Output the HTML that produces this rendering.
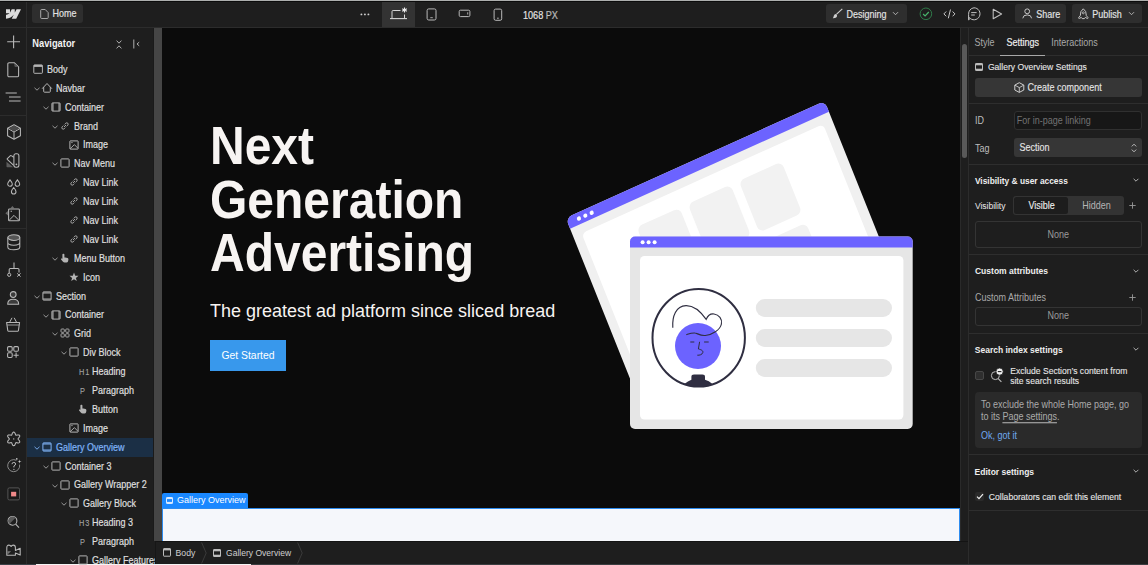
<!DOCTYPE html>
<html><head><meta charset="utf-8">
<style>
*{box-sizing:border-box;margin:0;padding:0}
html,body{width:1148px;height:565px;overflow:hidden;background:#1e1e1e}
body{font-family:"Liberation Sans",sans-serif;color:#d8d8d8;position:relative}
.a{position:absolute}
.t{position:absolute;white-space:nowrap;line-height:1}
svg{position:absolute;overflow:visible}
.ln{position:absolute;background:#2c2c2c}
</style></head><body>
<!-- top edge -->
<div class="a" style="left:0;top:0;width:1148px;height:1px;background:#adafae"></div>
<div class="a" style="left:0;top:1px;width:1148px;height:1px;background:#0c0c0c"></div>
<!-- top bar bottom border -->
<div class="ln" style="left:0;top:27px;width:1148px;height:1px"></div>

<!-- TOP BAR -->
<svg style="left:6px;top:9px" width="15" height="10" viewBox="0 0 1080 675"><path d="M1080 0L735.386 675H411.695L555.916 395.233H549.445C430.464 550.004 252.942 651.882 0 675V399.1C0 399.1 161.813 389.542 256.938 289.51H0V0.0041H288.771V237.522L295.252 237.496L413.253 0.0041H631.644V236.011L638.126 236.001L760.556 0H1080Z" fill="#dcdcdc"/></svg>
<div class="a" style="left:32px;top:4.3px;width:51px;height:19px;border-radius:3px;background:#2e2e2e"></div>
<svg style="left:40px;top:9px" width="9" height="10" viewBox="0 0 9 10"><path d="M1.6 0.5 H5.2 L8.2 3.6 V8.6 Q8.2 9.5 7.3 9.5 H1.6 Q0.7 9.5 0.7 8.6 V1.4 Q0.7 0.5 1.6 0.5 Z" fill="none" stroke="#b5b5b5" stroke-width="0.9"/></svg>
<div class="t" style="left:52.5px;top:10.4px;font-size:9px;color:#e3e3e3;transform:scaleY(1.12);transform-origin:0 7.62px;-webkit-text-stroke:0.15px #e3e3e3">Home</div>

<svg style="left:360px;top:12.5px" width="10" height="3" viewBox="0 0 10 3"><circle cx="1.4" cy="1.4" r="0.95" fill="#cfcfcf"/><circle cx="4.9" cy="1.4" r="0.95" fill="#cfcfcf"/><circle cx="8.4" cy="1.4" r="0.95" fill="#cfcfcf"/></svg>
<div class="a" style="left:382px;top:2px;width:33px;height:25px;background:#333"></div>
<svg style="left:389px;top:6px" width="20" height="14" viewBox="0 0 20 14"><path d="M3 12.3 V5.6 Q3 4.5 4.1 4.5 H11.5" fill="none" stroke="#d6d6d6" stroke-width="1"/><path d="M15.5 8.5 V12.3" stroke="#d6d6d6" stroke-width="1"/><path d="M1 12.6 H18" stroke="#d6d6d6" stroke-width="1.1"/><path d="M15.5 1.4 V6.6 M13.2 2.7 L17.8 5.3 M13.2 5.3 L17.8 2.7" stroke="#eeeeee" stroke-width="1.1"/></svg>
<svg style="left:426px;top:7.5px" width="11" height="13" viewBox="0 0 11 13"><rect x="1.1" y="0.9" width="8.9" height="11.1" rx="1.6" fill="none" stroke="#b9b9b9" stroke-width="1"/><path d="M4.3 9.7 H6.8" stroke="#b9b9b9" stroke-width="0.9"/></svg>
<svg style="left:458px;top:9px" width="13" height="9" viewBox="0 0 13 9"><rect x="1.2" y="1.2" width="10.7" height="6.4" rx="1.3" fill="none" stroke="#b9b9b9" stroke-width="1"/><path d="M9.7 3.3 V5.5" stroke="#b9b9b9" stroke-width="0.9"/></svg>
<svg style="left:493px;top:7.5px" width="10" height="13" viewBox="0 0 10 13"><rect x="1.1" y="1.1" width="7.6" height="11.2" rx="1.5" fill="none" stroke="#b9b9b9" stroke-width="1"/><path d="M4 10.2 H5.8" stroke="#b9b9b9" stroke-width="0.9"/></svg>
<div class="t" style="left:523px;top:11.5px;font-size:9.1px;color:#e6e6e6;transform:scaleY(1.12);transform-origin:0 7.62px;-webkit-text-stroke:0.15px #e3e3e3">1068 <span style="color:#a8a8a8">PX</span></div>

<div class="a" style="left:826px;top:4.4px;width:81.3px;height:18.6px;border-radius:3px;background:#2e2e2e"></div>
<svg style="left:832px;top:8px" width="11" height="11" viewBox="0 0 11 11"><path d="M10.3 0.8 L4.6 6.2" stroke="#d0d0d0" stroke-width="1.1"/><path d="M4.2 6 Q2.3 5.8 1.8 7.7 Q1.5 9.2 0.8 10.2 Q3 10.3 4.2 9.4 Q5.5 8.3 4.9 6.8 Z" fill="#d0d0d0"/></svg>
<div class="t" style="left:846.5px;top:10.7px;font-size:9px;color:#e3e3e3;transform:scaleY(1.12);transform-origin:0 7.62px;-webkit-text-stroke:0.15px #e3e3e3">Designing</div>
<svg style="left:892px;top:11px" width="7" height="5" viewBox="0 0 7 5"><path d="M1 1.2 L3.5 3.7 L6 1.2" fill="none" stroke="#bdbdbd" stroke-width="0.9"/></svg>
<svg style="left:919px;top:6.5px" width="14" height="14" viewBox="0 0 14 14"><circle cx="6.9" cy="6.8" r="5.8" fill="none" stroke="#2f7a49" stroke-width="1"/><path d="M4.1 7 L6.1 9 L9.8 5" fill="none" stroke="#48b36c" stroke-width="1.2"/></svg>
<svg style="left:943px;top:7.5px" width="13" height="12" viewBox="0 0 13 12"><path d="M3.2 3.5 L0.9 5.9 L3.2 8.3 M9.6 3.5 L11.9 5.9 L9.6 8.3 M7.5 1.5 L5.3 10.3" fill="none" stroke="#c8c8c8" stroke-width="1"/></svg>
<svg style="left:966.5px;top:6.5px" width="14" height="14" viewBox="0 0 14 14"><path d="M7 0.8 A6 6 0 1 1 2.2 10.4 L2 13 Q1.6 13.2 1.6 12.8 V7.3 A6 6 0 0 1 7 0.8 Z" fill="none" stroke="#c0c0c0" stroke-width="1"/><path d="M4.2 5.6 H9.6 M4.2 8 H7.8" stroke="#c0c0c0" stroke-width="1"/></svg>
<svg style="left:992px;top:7.7px" width="11" height="12" viewBox="0 0 11 12"><path d="M1.2 1.2 L9.6 6 L1.2 10.8 Z" fill="none" stroke="#c0c0c0" stroke-width="1.05" stroke-linejoin="round"/></svg>

<div class="a" style="left:1015.3px;top:4.3px;width:50.7px;height:18.4px;border-radius:3px;background:#2e2e2e"></div>
<svg style="left:1022px;top:8px" width="11" height="11" viewBox="0 0 11 11"><circle cx="5.2" cy="3.3" r="2.4" fill="none" stroke="#c8c8c8" stroke-width="1"/><path d="M0.8 10.3 Q1 6.9 5.2 6.9 Q9.4 6.9 9.6 10.3" fill="none" stroke="#c8c8c8" stroke-width="1"/></svg>
<div class="t" style="left:1036.3px;top:10.8px;font-size:9px;color:#e3e3e3;transform:scaleY(1.12);transform-origin:0 7.62px;-webkit-text-stroke:0.15px #e3e3e3">Share</div>
<div class="a" style="left:1072.4px;top:4.3px;width:69.6px;height:18.4px;border-radius:3px;background:#2e2e2e"></div>
<svg style="left:1078px;top:7.5px" width="11" height="12" viewBox="0 0 11 12"><path d="M5.3 0.8 Q8.6 3 8.3 7.6 L10 9.6 Q10.2 10.6 9.2 10.4 L7.3 9.4 L6.4 10.6 H4.2 L3.3 9.4 L1.4 10.4 Q0.5 10.6 0.7 9.6 L2.3 7.6 Q2 3 5.3 0.8 Z" fill="none" stroke="#c8c8c8" stroke-width="1" stroke-linejoin="round"/><circle cx="5.3" cy="4.8" r="1" fill="none" stroke="#c8c8c8" stroke-width="0.8"/></svg>
<div class="t" style="left:1092.3px;top:10.8px;font-size:9px;color:#e3e3e3;transform:scaleY(1.12);transform-origin:0 7.62px;-webkit-text-stroke:0.15px #e3e3e3">Publish</div>
<svg style="left:1127.5px;top:11px" width="7" height="5" viewBox="0 0 7 5"><path d="M1 1.2 L3.5 3.7 L6 1.2" fill="none" stroke="#bdbdbd" stroke-width="0.9"/></svg>

<!-- left rail border -->
<div class="ln" style="left:26px;top:2px;width:1px;height:563px"></div>
<div class="ln" style="left:0;top:115px;width:26px;height:1px"></div>
<div class="ln" style="left:0;top:228px;width:26px;height:1px"></div>

<!-- canvas -->
<div class="a" id="canvas" style="left:162px;top:28px;width:798px;height:513px;background:#0b0b0b;overflow:hidden"></div>
<!-- canvas content -->
<div class="t" style="left:210px;top:124.0px;font-size:48px;line-height:48px;font-weight:700;color:#f7f4f2;transform:scaleY(1.105);transform-origin:0 40.63px">Next</div>
<div class="t" style="left:210px;top:177.5px;font-size:48px;line-height:48px;font-weight:700;color:#f7f4f2;transform:scaleY(1.105);transform-origin:0 40.63px">Generation</div>
<div class="t" style="left:210px;top:230.9px;font-size:48px;line-height:48px;font-weight:700;color:#f7f4f2;transform:scaleY(1.105);transform-origin:0 40.63px">Advertising</div>

<div class="t" style="left:210px;top:301.6px;font-size:18px;line-height:18px;color:#f7f4f2;transform:scaleY(1.06);transform-origin:0 15.24px">The greatest ad platform since sliced bread</div>
<div class="a" style="left:210px;top:340px;width:76px;height:30.5px;background:#3898ec"></div>
<div class="t" style="left:210px;top:350.9px;width:76px;text-align:center;font-size:10.4px;color:#fff;transform:scaleY(1.12);transform-origin:0 8.8px">Get Started</div>

<svg style="left:0;top:0" width="1148" height="565" viewBox="0 0 1148 565">
 <g transform="matrix(0.9113,-0.412,0.3714,0.9285,565.8,218.0)">
  <rect x="0" y="0" width="284" height="200" rx="6.5" fill="#f0f0f0"/>
  <path d="M0 11.6 V6.5 A6.5 6.5 0 0 1 6.5 0 H277.5 A6.5 6.5 0 0 1 284 6.5 V11.6 Z" fill="#6c63ff"/>
  <circle cx="12" cy="5.9" r="2.1" fill="#fff"/><circle cx="19" cy="5.9" r="2.1" fill="#fff"/><circle cx="26" cy="5.9" r="2.1" fill="#fff"/>
  <rect x="9" y="20.5" width="265" height="172" rx="5" fill="#fff"/>
  <rect x="62.5" y="37.5" width="47" height="55.5" rx="6" fill="#f2f2f2"/>
  <rect x="118.5" y="37.5" width="47" height="55.5" rx="6" fill="#f2f2f2"/>
  <rect x="174.5" y="37.5" width="47" height="55.5" rx="6" fill="#f2f2f2"/>
  <rect x="62.5" y="103.5" width="47" height="55.5" rx="6" fill="#f2f2f2"/>
  <rect x="118.5" y="103.5" width="47" height="55.5" rx="6" fill="#f2f2f2"/>
  <rect x="174.5" y="103.5" width="47" height="55.5" rx="6" fill="#f2f2f2"/>
 </g>
 <rect x="630" y="236.5" width="282.7" height="192.5" rx="5" fill="#e6e6e6"/>
 <path d="M630 247.6 V241.5 A5 5 0 0 1 635 236.5 H907.7 A5 5 0 0 1 912.7 241.5 V247.6 Z" fill="#6c63ff"/>
 <circle cx="642.6" cy="242.2" r="2" fill="#fff"/><circle cx="648.6" cy="242.2" r="2" fill="#fff"/><circle cx="654.6" cy="242.2" r="2" fill="#fff"/>
 <rect x="640" y="256" width="263.4" height="163.6" rx="4.5" fill="#fff"/>
 <rect x="755.8" y="299" width="136.2" height="18" rx="9" fill="#e6e6e6"/>
 <rect x="755.8" y="329" width="136.2" height="18" rx="9" fill="#e6e6e6"/>
 <rect x="755.8" y="359" width="136.2" height="18" rx="9" fill="#e6e6e6"/>
 <ellipse cx="698.7" cy="337.7" rx="46.2" ry="48.8" fill="#fff" stroke="#2f2e41" stroke-width="2"/>
 <circle cx="698" cy="346" r="23" fill="#6c63ff"/>
 <path d="M684.3 384 Q688 381 691.4 379.8 V376.8 Q691.4 374.4 694 374.4 H702.4 Q705 374.4 705 376.8 V379.8 Q709 381 712.2 383.8 Q699 389.8 684.3 384 Z" fill="#2f2e41"/>
 <path d="M672.8 327.8 C672 316 676 306 686 305.6 C694 305.4 701 312 706.2 319.4 C708 315 711 313.6 714 314 C719 314.6 722.5 319 721.4 324 C720.2 330 712 334.8 705.3 335.5 C700 336 697 333 694.9 333 C691 332.8 688.5 334 686.3 334.7" fill="none" stroke="#2f2e41" stroke-width="1.15"/>
 <path d="M690.3 342 H694.3 M704.1 342 H708.7" stroke="#2f2e41" stroke-width="1"/>
 <path d="M699.6 341.8 L698.4 349 C701 349.6 703.4 350.6 702.8 352.6 C702.2 354.6 699.6 355.4 697.3 355.2" fill="none" stroke="#2f2e41" stroke-width="1"/>
</svg>

<!-- selected section -->
<div class="a" style="left:162px;top:507.6px;width:798px;height:33.4px;background:#f5f7fb;border:1px solid #2d8cf0;border-bottom:0"></div>
<div class="a" style="left:162px;top:493px;width:86px;height:15px;background:#1a88ff;border-radius:2px 2px 0 0"></div>
<svg style="left:166px;top:497px" width="7" height="7" viewBox="0 0 7 7"><rect x="0.5" y="0.5" width="6" height="6" rx="0.6" fill="none" stroke="#d8e9ff" stroke-width="1"/><rect x="0.5" y="0.5" width="6" height="1.6" fill="#d8e9ff"/><rect x="0.5" y="4.9" width="6" height="1.6" fill="#d8e9ff"/></svg>
<div class="t" style="left:177px;top:496.2px;font-size:9px;color:#fff">Gallery Overview</div>


<!-- nav scroll strip -->
<div class="a" style="left:153px;top:28px;width:1px;height:513px;background:#1a1a1a"></div>
<div class="a" style="left:154px;top:28px;width:8px;height:513px;background:#454545"></div>

<!-- right scroll strip -->
<div class="a" style="left:960px;top:28px;width:1px;height:537px;background:#2a2a2a"></div>
<div class="a" style="left:962px;top:44px;width:5px;height:114px;border-radius:3px;background:#595959"></div>
<div class="ln" style="left:968px;top:28px;width:1px;height:537px"></div>

<!-- breadcrumb -->
<div class="a" style="left:154.5px;top:541px;width:813.5px;height:22.5px;background:#1e1e1e;border-top:1px solid #141414;border-left:1px solid #161616"></div>

<!-- bottom row -->
<div class="a" style="left:0;top:564px;width:36px;height:1px;background:#3a4046"></div>
<div class="a" style="left:36px;top:564px;width:215px;height:1px;background:#f4f4f4"></div>
<div class="a" style="left:251px;top:564px;width:897px;height:1px;background:#3a3d40"></div>
<!--NAV-START-->
<div class="a" style="left:27px;top:28px;width:128px;height:537px;overflow:hidden">
<div class="t" style="left:5.3px;top:11.72px;font-size:9.3px;font-weight:700;color:#f2f2f2;transform:scaleY(1.12);transform-origin:0 7.88px">Navigator</div>
<svg style="left:89px;top:12px" width="6" height="9" viewBox="0 0 6 9"><path d="M0.6 0.6 L3 3.2 L5.4 0.6 M0.6 8.4 L3 5.8 L5.4 8.4" fill="none" stroke="#bdbdbd" stroke-width="0.9"/></svg>
<svg style="left:105.5px;top:11px" width="8" height="10" viewBox="0 0 8 10"><path d="M0.8 0.5 V9.5" stroke="#bdbdbd" stroke-width="0.9"/><path d="M6.2 3.2 L4 5 L6.2 6.8" fill="none" stroke="#bdbdbd" stroke-width="0.9"/></svg>
<svg style="left:6.4px;top:36.0px" width="10" height="10" viewBox="0 0 10 10"><rect x="0.8" y="0.9" width="8.6" height="8.4" rx="0.6" fill="none" stroke="#b4b4b4" stroke-width="1"/><rect x="0.9" y="1" width="8.4" height="1.9" fill="#b4b4b4"/></svg>
<div class="t" style="left:20px;top:37.88px;font-size:9px;transform:scaleY(1.12);transform-origin:0 7.62px;color:#dedede;-webkit-text-stroke:0.2px #dedede">Body</div>
<svg style="left:7.0px;top:58.89px" width="6" height="4" viewBox="0 0 6 4"><path d="M0.5 0.8 L3 3.2 L5.5 0.8" fill="none" stroke="#a5a5a5" stroke-width="0.9"/></svg>
<svg style="left:15.4px;top:54.89px" width="10" height="10" viewBox="0 0 10 10"><path d="M0.4 5.4 L5 0.5 L9.6 5.4" fill="none" stroke="#b4b4b4" stroke-width="1" stroke-linejoin="round" stroke-linecap="round"/><path d="M1.7 4.1 V8.5 Q1.7 9.2 2.4 9.2 H7.6 Q8.3 9.2 8.3 8.5 V4.1" fill="none" stroke="#b4b4b4" stroke-width="1"/></svg>
<div class="t" style="left:29px;top:56.77px;font-size:9px;transform:scaleY(1.12);transform-origin:0 7.62px;color:#dedede;-webkit-text-stroke:0.2px #dedede">Navbar</div>
<svg style="left:16.0px;top:77.78px" width="6" height="4" viewBox="0 0 6 4"><path d="M0.5 0.8 L3 3.2 L5.5 0.8" fill="none" stroke="#a5a5a5" stroke-width="0.9"/></svg>
<svg style="left:24.4px;top:73.78px" width="10" height="10" viewBox="0 0 10 10"><rect x="0.9" y="0.9" width="8.2" height="8.2" rx="0.6" fill="none" stroke="#b4b4b4" stroke-width="1"/><rect x="1" y="1" width="1.9" height="8" fill="#b4b4b4" opacity=".55"/><rect x="7.1" y="1" width="1.9" height="8" fill="#b4b4b4" opacity=".55"/></svg>
<div class="t" style="left:38px;top:75.66px;font-size:9px;transform:scaleY(1.12);transform-origin:0 7.62px;color:#dedede;-webkit-text-stroke:0.2px #dedede">Container</div>
<svg style="left:25.0px;top:96.67px" width="6" height="4" viewBox="0 0 6 4"><path d="M0.5 0.8 L3 3.2 L5.5 0.8" fill="none" stroke="#a5a5a5" stroke-width="0.9"/></svg>
<svg style="left:33.4px;top:92.67px" width="10" height="10" viewBox="0 0 10 10"><path d="M4.6 3.4 L5.8 2.2 Q6.8 1.4 7.8 2.2 Q8.6 3.2 7.8 4.2 L6.6 5.4 M5.4 6.6 L4.2 7.8 Q3.2 8.6 2.2 7.8 Q1.4 6.8 2.2 5.8 L3.4 4.6" fill="none" stroke="#b4b4b4" stroke-width="0.9"/><path d="M4 6 L6 4" stroke="#b4b4b4" stroke-width="0.9"/></svg>
<div class="t" style="left:47px;top:94.55px;font-size:9px;transform:scaleY(1.12);transform-origin:0 7.62px;color:#dedede;-webkit-text-stroke:0.2px #dedede">Brand</div>
<svg style="left:42.4px;top:111.56px" width="10" height="10" viewBox="0 0 10 10"><rect x="0.9" y="0.9" width="8.2" height="8.2" rx="0.4" fill="none" stroke="#b4b4b4" stroke-width="1"/><path d="M1.1 8.8 L5.4 4.6 L8.9 8.2" fill="none" stroke="#b4b4b4" stroke-width="0.9"/><path d="M2.3 2.6 H3.6" stroke="#b4b4b4" stroke-width="0.9"/></svg>
<div class="t" style="left:56px;top:113.44px;font-size:9px;transform:scaleY(1.12);transform-origin:0 7.62px;color:#dedede;-webkit-text-stroke:0.2px #dedede">Image</div>
<svg style="left:25.0px;top:134.45px" width="6" height="4" viewBox="0 0 6 4"><path d="M0.5 0.8 L3 3.2 L5.5 0.8" fill="none" stroke="#a5a5a5" stroke-width="0.9"/></svg>
<svg style="left:33.4px;top:130.45px" width="10" height="10" viewBox="0 0 10 10"><rect x="0.9" y="0.9" width="8.2" height="8.2" rx="0.6" fill="none" stroke="#b4b4b4" stroke-width="1"/></svg>
<div class="t" style="left:47px;top:132.33px;font-size:9px;transform:scaleY(1.12);transform-origin:0 7.62px;color:#dedede;-webkit-text-stroke:0.2px #dedede">Nav Menu</div>
<svg style="left:42.4px;top:149.34px" width="10" height="10" viewBox="0 0 10 10"><path d="M4.6 3.4 L5.8 2.2 Q6.8 1.4 7.8 2.2 Q8.6 3.2 7.8 4.2 L6.6 5.4 M5.4 6.6 L4.2 7.8 Q3.2 8.6 2.2 7.8 Q1.4 6.8 2.2 5.8 L3.4 4.6" fill="none" stroke="#b4b4b4" stroke-width="0.9"/><path d="M4 6 L6 4" stroke="#b4b4b4" stroke-width="0.9"/></svg>
<div class="t" style="left:56px;top:151.22px;font-size:9px;transform:scaleY(1.12);transform-origin:0 7.62px;color:#dedede;-webkit-text-stroke:0.2px #dedede">Nav Link</div>
<svg style="left:42.4px;top:168.23px" width="10" height="10" viewBox="0 0 10 10"><path d="M4.6 3.4 L5.8 2.2 Q6.8 1.4 7.8 2.2 Q8.6 3.2 7.8 4.2 L6.6 5.4 M5.4 6.6 L4.2 7.8 Q3.2 8.6 2.2 7.8 Q1.4 6.8 2.2 5.8 L3.4 4.6" fill="none" stroke="#b4b4b4" stroke-width="0.9"/><path d="M4 6 L6 4" stroke="#b4b4b4" stroke-width="0.9"/></svg>
<div class="t" style="left:56px;top:170.11px;font-size:9px;transform:scaleY(1.12);transform-origin:0 7.62px;color:#dedede;-webkit-text-stroke:0.2px #dedede">Nav Link</div>
<svg style="left:42.4px;top:187.12px" width="10" height="10" viewBox="0 0 10 10"><path d="M4.6 3.4 L5.8 2.2 Q6.8 1.4 7.8 2.2 Q8.6 3.2 7.8 4.2 L6.6 5.4 M5.4 6.6 L4.2 7.8 Q3.2 8.6 2.2 7.8 Q1.4 6.8 2.2 5.8 L3.4 4.6" fill="none" stroke="#b4b4b4" stroke-width="0.9"/><path d="M4 6 L6 4" stroke="#b4b4b4" stroke-width="0.9"/></svg>
<div class="t" style="left:56px;top:189.0px;font-size:9px;transform:scaleY(1.12);transform-origin:0 7.62px;color:#dedede;-webkit-text-stroke:0.2px #dedede">Nav Link</div>
<svg style="left:42.4px;top:206.01px" width="10" height="10" viewBox="0 0 10 10"><path d="M4.6 3.4 L5.8 2.2 Q6.8 1.4 7.8 2.2 Q8.6 3.2 7.8 4.2 L6.6 5.4 M5.4 6.6 L4.2 7.8 Q3.2 8.6 2.2 7.8 Q1.4 6.8 2.2 5.8 L3.4 4.6" fill="none" stroke="#b4b4b4" stroke-width="0.9"/><path d="M4 6 L6 4" stroke="#b4b4b4" stroke-width="0.9"/></svg>
<div class="t" style="left:56px;top:207.89px;font-size:9px;transform:scaleY(1.12);transform-origin:0 7.62px;color:#dedede;-webkit-text-stroke:0.2px #dedede">Nav Link</div>
<svg style="left:25.0px;top:228.9px" width="6" height="4" viewBox="0 0 6 4"><path d="M0.5 0.8 L3 3.2 L5.5 0.8" fill="none" stroke="#a5a5a5" stroke-width="0.9"/></svg>
<svg style="left:33.4px;top:224.9px" width="10" height="10" viewBox="0 0 10 10"><path d="M3.3 0.8 Q4.3 0.6 4.4 1.6 V4.6 Q6.2 4.4 7.6 5 Q8.6 5.5 8.4 6.8 L8 8.6 Q7.6 9.6 6.5 9.6 H4.6 Q3.6 9.6 3 8.8 L1.1 6.5 Q0.7 5.8 1.3 5.5 Q1.9 5.2 2.4 5.8 V1.6 Q2.4 0.9 3.3 0.8 Z" fill="#b4b4b4"/></svg>
<div class="t" style="left:47px;top:226.78px;font-size:9px;transform:scaleY(1.12);transform-origin:0 7.62px;color:#dedede;-webkit-text-stroke:0.2px #dedede">Menu Button</div>
<svg style="left:42.4px;top:243.79px" width="10" height="10" viewBox="0 0 10 10"><path d="M5 0.6 L6.2 3.7 L9.5 3.8 L6.9 5.9 L7.8 9.1 L5 7.3 L2.2 9.1 L3.1 5.9 L0.5 3.8 L3.8 3.7 Z" fill="#b4b4b4"/></svg>
<div class="t" style="left:56px;top:245.67px;font-size:9px;transform:scaleY(1.12);transform-origin:0 7.62px;color:#dedede;-webkit-text-stroke:0.2px #dedede">Icon</div>
<svg style="left:7.0px;top:266.68px" width="6" height="4" viewBox="0 0 6 4"><path d="M0.5 0.8 L3 3.2 L5.5 0.8" fill="none" stroke="#a5a5a5" stroke-width="0.9"/></svg>
<svg style="left:15.4px;top:262.68px" width="10" height="10" viewBox="0 0 10 10"><rect x="0.9" y="0.9" width="8.2" height="8.2" rx="0.6" fill="none" stroke="#b4b4b4" stroke-width="1"/><rect x="1" y="1" width="8" height="1.9" fill="#b4b4b4" opacity=".55"/><rect x="1" y="7.1" width="8" height="1.9" fill="#b4b4b4" opacity=".55"/></svg>
<div class="t" style="left:29px;top:264.56px;font-size:9px;transform:scaleY(1.12);transform-origin:0 7.62px;color:#dedede;-webkit-text-stroke:0.2px #dedede">Section</div>
<svg style="left:16.0px;top:285.57px" width="6" height="4" viewBox="0 0 6 4"><path d="M0.5 0.8 L3 3.2 L5.5 0.8" fill="none" stroke="#a5a5a5" stroke-width="0.9"/></svg>
<svg style="left:24.4px;top:281.57px" width="10" height="10" viewBox="0 0 10 10"><rect x="0.9" y="0.9" width="8.2" height="8.2" rx="0.6" fill="none" stroke="#b4b4b4" stroke-width="1"/><rect x="1" y="1" width="1.9" height="8" fill="#b4b4b4" opacity=".55"/><rect x="7.1" y="1" width="1.9" height="8" fill="#b4b4b4" opacity=".55"/></svg>
<div class="t" style="left:38px;top:283.45px;font-size:9px;transform:scaleY(1.12);transform-origin:0 7.62px;color:#dedede;-webkit-text-stroke:0.2px #dedede">Container</div>
<svg style="left:25.0px;top:304.46px" width="6" height="4" viewBox="0 0 6 4"><path d="M0.5 0.8 L3 3.2 L5.5 0.8" fill="none" stroke="#a5a5a5" stroke-width="0.9"/></svg>
<svg style="left:33.4px;top:300.46px" width="10" height="10" viewBox="0 0 10 10"><rect x="1" y="1" width="3.3" height="3.3" rx="0.8" fill="none" stroke="#b4b4b4" stroke-width="0.9"/><rect x="5.7" y="1" width="3.3" height="3.3" rx="0.8" fill="none" stroke="#b4b4b4" stroke-width="0.9"/><rect x="1" y="5.7" width="3.3" height="3.3" rx="0.8" fill="none" stroke="#b4b4b4" stroke-width="0.9"/><rect x="5.7" y="5.7" width="3.3" height="3.3" rx="0.8" fill="none" stroke="#b4b4b4" stroke-width="0.9"/></svg>
<div class="t" style="left:47px;top:302.34px;font-size:9px;transform:scaleY(1.12);transform-origin:0 7.62px;color:#dedede;-webkit-text-stroke:0.2px #dedede">Grid</div>
<svg style="left:34.0px;top:323.35px" width="6" height="4" viewBox="0 0 6 4"><path d="M0.5 0.8 L3 3.2 L5.5 0.8" fill="none" stroke="#a5a5a5" stroke-width="0.9"/></svg>
<svg style="left:42.4px;top:319.35px" width="10" height="10" viewBox="0 0 10 10"><rect x="0.9" y="0.9" width="8.2" height="8.2" rx="0.6" fill="none" stroke="#b4b4b4" stroke-width="1"/></svg>
<div class="t" style="left:56px;top:321.23px;font-size:9px;transform:scaleY(1.12);transform-origin:0 7.62px;color:#dedede;-webkit-text-stroke:0.2px #dedede">Div Block</div>
<div class="t" style="left:51.7px;top:340.12px;font-size:9px;color:#a5a5a5;letter-spacing:1.1px;transform:scale(0.82,1.1);transform-origin:0 7.62px;-webkit-text-stroke:0.1px #a5a5a5">H1</div>
<div class="t" style="left:65px;top:340.12px;font-size:9px;transform:scaleY(1.12);transform-origin:0 7.62px;color:#dedede;-webkit-text-stroke:0.2px #dedede">Heading</div>
<div class="t" style="left:52.6px;top:359.01px;font-size:9px;color:#a5a5a5;letter-spacing:0;transform:scale(0.82,1.1);transform-origin:0 7.62px;-webkit-text-stroke:0.1px #a5a5a5">P</div>
<div class="t" style="left:65px;top:359.01px;font-size:9px;transform:scaleY(1.12);transform-origin:0 7.62px;color:#dedede;-webkit-text-stroke:0.2px #dedede">Paragraph</div>
<svg style="left:51.4px;top:376.02px" width="10" height="10" viewBox="0 0 10 10"><path d="M3.3 0.8 Q4.3 0.6 4.4 1.6 V4.6 Q6.2 4.4 7.6 5 Q8.6 5.5 8.4 6.8 L8 8.6 Q7.6 9.6 6.5 9.6 H4.6 Q3.6 9.6 3 8.8 L1.1 6.5 Q0.7 5.8 1.3 5.5 Q1.9 5.2 2.4 5.8 V1.6 Q2.4 0.9 3.3 0.8 Z" fill="#b4b4b4"/></svg>
<div class="t" style="left:65px;top:377.9px;font-size:9px;transform:scaleY(1.12);transform-origin:0 7.62px;color:#dedede;-webkit-text-stroke:0.2px #dedede">Button</div>
<svg style="left:42.4px;top:394.91px" width="10" height="10" viewBox="0 0 10 10"><rect x="0.9" y="0.9" width="8.2" height="8.2" rx="0.4" fill="none" stroke="#b4b4b4" stroke-width="1"/><path d="M1.1 8.8 L5.4 4.6 L8.9 8.2" fill="none" stroke="#b4b4b4" stroke-width="0.9"/><path d="M2.3 2.6 H3.6" stroke="#b4b4b4" stroke-width="0.9"/></svg>
<div class="t" style="left:56px;top:396.79px;font-size:9px;transform:scaleY(1.12);transform-origin:0 7.62px;color:#dedede;-webkit-text-stroke:0.2px #dedede">Image</div>
<div class="a" style="left:0;top:409.7px;width:126px;height:19px;background:#1b2f45"></div>
<svg style="left:7.0px;top:417.8px" width="6" height="4" viewBox="0 0 6 4"><path d="M0.5 0.8 L3 3.2 L5.5 0.8" fill="none" stroke="#7fb2f5" stroke-width="0.9"/></svg>
<svg style="left:15.4px;top:413.8px" width="10" height="10" viewBox="0 0 10 10"><rect x="0.9" y="0.9" width="8.2" height="8.2" rx="0.6" fill="none" stroke="#7fb2f5" stroke-width="1"/><rect x="1" y="1" width="8" height="1.9" fill="#7fb2f5" opacity=".55"/><rect x="1" y="7.1" width="8" height="1.9" fill="#7fb2f5" opacity=".55"/></svg>
<div class="t" style="left:29px;top:415.68px;font-size:9px;transform:scaleY(1.12);transform-origin:0 7.62px;color:#7fb2f5;-webkit-text-stroke:0.2px #7fb2f5">Gallery Overview</div>
<svg style="left:16.0px;top:436.69px" width="6" height="4" viewBox="0 0 6 4"><path d="M0.5 0.8 L3 3.2 L5.5 0.8" fill="none" stroke="#a5a5a5" stroke-width="0.9"/></svg>
<svg style="left:24.4px;top:432.69px" width="10" height="10" viewBox="0 0 10 10"><rect x="0.9" y="0.9" width="8.2" height="8.2" rx="0.6" fill="none" stroke="#b4b4b4" stroke-width="1"/></svg>
<div class="t" style="left:38px;top:434.57px;font-size:9px;transform:scaleY(1.12);transform-origin:0 7.62px;color:#dedede;-webkit-text-stroke:0.2px #dedede">Container 3</div>
<svg style="left:25.0px;top:455.58px" width="6" height="4" viewBox="0 0 6 4"><path d="M0.5 0.8 L3 3.2 L5.5 0.8" fill="none" stroke="#a5a5a5" stroke-width="0.9"/></svg>
<svg style="left:33.4px;top:451.58px" width="10" height="10" viewBox="0 0 10 10"><rect x="0.9" y="0.9" width="8.2" height="8.2" rx="0.6" fill="none" stroke="#b4b4b4" stroke-width="1"/></svg>
<div class="t" style="left:47px;top:453.46px;font-size:9px;transform:scaleY(1.12);transform-origin:0 7.62px;color:#dedede;-webkit-text-stroke:0.2px #dedede">Gallery Wrapper 2</div>
<svg style="left:34.0px;top:474.47px" width="6" height="4" viewBox="0 0 6 4"><path d="M0.5 0.8 L3 3.2 L5.5 0.8" fill="none" stroke="#a5a5a5" stroke-width="0.9"/></svg>
<svg style="left:42.4px;top:470.47px" width="10" height="10" viewBox="0 0 10 10"><rect x="0.9" y="0.9" width="8.2" height="8.2" rx="0.6" fill="none" stroke="#b4b4b4" stroke-width="1"/></svg>
<div class="t" style="left:56px;top:472.35px;font-size:9px;transform:scaleY(1.12);transform-origin:0 7.62px;color:#dedede;-webkit-text-stroke:0.2px #dedede">Gallery Block</div>
<div class="t" style="left:51.7px;top:491.24px;font-size:9px;color:#a5a5a5;letter-spacing:1.1px;transform:scale(0.82,1.1);transform-origin:0 7.62px;-webkit-text-stroke:0.1px #a5a5a5">H3</div>
<div class="t" style="left:65px;top:491.24px;font-size:9px;transform:scaleY(1.12);transform-origin:0 7.62px;color:#dedede;-webkit-text-stroke:0.2px #dedede">Heading 3</div>
<div class="t" style="left:52.6px;top:510.13px;font-size:9px;color:#a5a5a5;letter-spacing:0;transform:scale(0.82,1.1);transform-origin:0 7.62px;-webkit-text-stroke:0.1px #a5a5a5">P</div>
<div class="t" style="left:65px;top:510.13px;font-size:9px;transform:scaleY(1.12);transform-origin:0 7.62px;color:#dedede;-webkit-text-stroke:0.2px #dedede">Paragraph</div>
<svg style="left:43.0px;top:531.14px" width="6" height="4" viewBox="0 0 6 4"><path d="M0.5 0.8 L3 3.2 L5.5 0.8" fill="none" stroke="#a5a5a5" stroke-width="0.9"/></svg>
<svg style="left:51.4px;top:527.14px" width="10" height="10" viewBox="0 0 10 10"><rect x="0.9" y="0.9" width="8.2" height="8.2" rx="0.6" fill="none" stroke="#b4b4b4" stroke-width="1"/></svg>
<div class="t" style="left:65px;top:529.02px;font-size:9px;transform:scaleY(1.12);transform-origin:0 7.62px;color:#dedede;-webkit-text-stroke:0.2px #dedede">Gallery Features</div>
</div>
<svg style="left:7px;top:34.5px" width="14" height="14" viewBox="0 0 14 14"><path d="M6.6 0.4 V13.2 M0.2 6.8 H13" stroke="#b8b8b8" stroke-width="1.1"/></svg>
<svg style="left:7px;top:61.5px" width="13" height="16" viewBox="0 0 13 16"><path d="M2.2 0.8 H7.4 L11.6 5 V13.4 Q11.6 14.8 10.2 14.8 H2.2 Q0.8 14.8 0.8 13.4 V2.2 Q0.8 0.8 2.2 0.8 Z" fill="none" stroke="#b8b8b8" stroke-width="1.05"/><path d="M7.4 1.2 L11.2 5 H8.6 Q7.4 5 7.4 3.8 Z" fill="#555"/></svg>
<svg style="left:5px;top:91.5px" width="17" height="11" viewBox="0 0 17 11"><path d="M0.6 1 H11.8 M4 5 H15.6 M4 9 H15.6" stroke="#b8b8b8" stroke-width="1.05"/></svg>
<svg style="left:6.5px;top:124px" width="15" height="17" viewBox="0 0 15 17"><path d="M7 0.8 L13.4 4.3 V11.8 L7 15.3 L0.6 11.8 V4.3 Z" fill="none" stroke="#b8b8b8" stroke-width="1.05" stroke-linejoin="round"/><path d="M0.8 4.4 L7 8 L13.2 4.4 M7 8 V15" fill="none" stroke="#b8b8b8" stroke-width="1"/><path d="M7 1.6 L12.4 4.4 L7 7.3 L1.6 4.4 Z" fill="#4a4a4a"/></svg>
<svg style="left:6px;top:152.5px" width="14" height="15" viewBox="0 0 14 15"><path d="M0.5 8.7 V13.6 Q0.5 14.3 1.2 14.3 H7.2 Z" fill="#5c5c5c"/><rect x="7.9" y="0.7" width="5" height="13.6" rx="2" fill="none" stroke="#b8b8b8" stroke-width="1.05"/><circle cx="10.4" cy="11.3" r="0.9" fill="#b8b8b8"/><path d="M7.7 4.3 L5.3 2.6 Q4.9 2.3 4.5 2.6 L1.3 5.6 Q0.9 6 1.3 6.4 L7.7 12.4" fill="none" stroke="#b8b8b8" stroke-width="1.05" stroke-linejoin="round"/></svg>
<svg style="left:6.5px;top:179px" width="14" height="17" viewBox="0 0 14 17"><path d="M3 0.8 Q5.3 3.6 5.3 5 A2.3 2.3 0 0 1 0.7 5 Q0.7 3.6 3 0.8 Z M10.4 0.8 Q12.7 3.6 12.7 5 A2.3 2.3 0 0 1 8.1 5 Q8.1 3.6 10.4 0.8 Z M6.7 8.5 Q9 11.3 9 12.7 A2.3 2.3 0 0 1 4.4 12.7 Q4.4 11.3 6.7 8.5 Z" fill="none" stroke="#b8b8b8" stroke-width="1.05"/></svg>
<svg style="left:4.5px;top:206px" width="16" height="16" viewBox="0 0 16 16"><path d="M5.4 2.3 L7.4 0.1 L9.4 2.3 Z M0.4 7.3 L2.9 5 V9.6 Z" fill="#6a6a6a"/><rect x="3.6" y="2.9" width="10.8" height="11.9" rx="0.9" fill="none" stroke="#b8b8b8" stroke-width="1.05"/><path d="M4.2 14.2 L9 9.4 L13.8 14.2" fill="none" stroke="#b8b8b8" stroke-width="1"/><path d="M5.6 5.3 H7" stroke="#b8b8b8" stroke-width="1.1"/></svg>
<svg style="left:6.5px;top:234px" width="14" height="17" viewBox="0 0 14 17"><ellipse cx="6.8" cy="3.6" rx="6" ry="2.8" fill="#555" stroke="#b8b8b8" stroke-width="1.05"/><path d="M0.8 3.6 V13 Q0.8 15.8 6.8 15.8 Q12.8 15.8 12.8 13 V3.6 M0.8 8.6 Q0.8 11.2 6.8 11.2 Q12.8 11.2 12.8 8.6" fill="none" stroke="#b8b8b8" stroke-width="1.05"/></svg>
<svg style="left:6.5px;top:262px" width="15" height="16" viewBox="0 0 15 16"><path d="M7 0.5 V6 M2.2 11 V7.6 Q2.2 6.4 3.4 6.4 H10.8 Q12 6.4 12 7.6 V10.6" fill="none" stroke="#b8b8b8" stroke-width="1.05"/><circle cx="2.2" cy="12.8" r="1.6" fill="none" stroke="#b8b8b8" stroke-width="1"/><path d="M10.2 11.4 L13.6 14.6 M13.6 11.4 L10.2 14.6" stroke="#b8b8b8" stroke-width="1"/></svg>
<svg style="left:7px;top:290.5px" width="13" height="14" viewBox="0 0 13 14"><circle cx="6.2" cy="3.5" r="2.9" fill="#3c3c3c" stroke="#b8b8b8" stroke-width="1.05"/><path d="M0.7 13.2 Q0.7 8.2 6.2 8.2 Q11.7 8.2 11.7 13.2 Z" fill="#3c3c3c" stroke="#b8b8b8" stroke-width="1.05" stroke-linejoin="round"/></svg>
<svg style="left:6px;top:317px" width="15" height="15" viewBox="0 0 15 15"><path d="M0.6 5.4 H13.6 L12.4 13.6 Q12.2 14.2 11.6 14.2 H2.6 Q2 14.2 1.8 13.6 Z" fill="none" stroke="#b8b8b8" stroke-width="1.05" stroke-linejoin="round"/><path d="M3.6 5.4 L6 0.8 M10.6 5.4 L8.2 0.8" stroke="#b8b8b8" stroke-width="1"/><path d="M1.2 8 H13" stroke="#b8b8b8" stroke-width="0.8"/></svg>
<svg style="left:7px;top:345.5px" width="13" height="13" viewBox="0 0 13 13"><rect x="0.6" y="0.6" width="4.6" height="4.6" rx="1.1" fill="none" stroke="#b8b8b8" stroke-width="1.05"/><rect x="6.8" y="0.6" width="4.6" height="4.6" rx="1.1" fill="none" stroke="#b8b8b8" stroke-width="1.05"/><rect x="0.6" y="6.8" width="4.6" height="4.6" rx="1.1" fill="none" stroke="#b8b8b8" stroke-width="1.05"/><path d="M9.1 6.6 V11.8 M6.5 9.2 H11.7" stroke="#b8b8b8" stroke-width="1.05"/></svg>
<svg style="left:6.5px;top:431.5px" width="14" height="15" viewBox="0 0 14 15"><path d="M6.70 0.05 L7.28 0.24 L7.78 0.77 L8.15 1.49 L8.40 2.23 L8.61 2.81 L8.88 3.13 L9.29 3.20 L9.90 3.09 L10.66 2.94 L11.47 2.90 L12.17 3.07 L12.63 3.47 L12.76 4.08 L12.55 4.77 L12.11 5.45 L11.60 6.04 L11.20 6.51 L11.05 6.90 L11.20 7.29 L11.60 7.76 L12.11 8.35 L12.55 9.03 L12.76 9.72 L12.63 10.32 L12.17 10.73 L11.47 10.90 L10.66 10.86 L9.90 10.71 L9.29 10.60 L8.88 10.67 L8.61 10.99 L8.40 11.57 L8.15 12.31 L7.78 13.03 L7.28 13.56 L6.70 13.75 L6.12 13.56 L5.62 13.03 L5.25 12.31 L5.00 11.57 L4.79 10.99 L4.53 10.67 L4.11 10.60 L3.50 10.71 L2.74 10.86 L1.93 10.90 L1.23 10.73 L0.77 10.33 L0.64 9.72 L0.85 9.03 L1.29 8.35 L1.80 7.76 L2.20 7.29 L2.35 6.90 L2.20 6.51 L1.80 6.04 L1.29 5.45 L0.85 4.77 L0.64 4.08 L0.77 3.48 L1.23 3.07 L1.93 2.90 L2.74 2.94 L3.50 3.09 L4.11 3.20 L4.53 3.13 L4.79 2.81 L5.00 2.23 L5.25 1.49 L5.62 0.77 L6.12 0.24 L6.70 0.05 Z" fill="none" stroke="#b8b8b8" stroke-width="1.05" stroke-linejoin="round"/><circle cx="6.7" cy="6.9" r="0.7" fill="#b8b8b8"/></svg>
<svg style="left:6.5px;top:457.5px" width="15" height="16" viewBox="0 0 15 16"><path d="M9.4 2.3 A6 6 0 1 0 12.6 6.6" fill="none" stroke="#8a8a8a" stroke-width="1"/><path d="M5 6.2 Q5 4.4 6.8 4.4 Q8.6 4.4 8.6 6 Q8.6 7.2 6.9 8 V9.4" fill="none" stroke="#b8b8b8" stroke-width="1"/><circle cx="6.9" cy="11.4" r="0.6" fill="#b8b8b8"/><path d="M12.6 1.6 L13 3.2 L14.6 3.6 L13 4 L12.6 5.6 L12.2 4 L10.6 3.6 L12.2 3.2 Z" fill="#d8d8d8"/><circle cx="9.8" cy="0.9" r="0.8" fill="#cfcfcf"/></svg>
<svg style="left:6.5px;top:486.5px" width="14" height="14" viewBox="0 0 14 14"><rect x="0.9" y="0.9" width="11.6" height="12" rx="1.4" fill="#1a1a1a" stroke="#565656" stroke-width="1"/><rect x="4.1" y="4.8" width="5.1" height="4.6" fill="#f08a8a"/></svg>
<svg style="left:7px;top:514.5px" width="13" height="14" viewBox="0 0 13 14"><circle cx="5.5" cy="5.8" r="4.4" fill="none" stroke="#b8b8b8" stroke-width="1.05"/><path d="M2.4 8.9 A4.4 4.4 0 0 1 8.6 2.7 Z" fill="#5a5a5a"/><path d="M8.7 9.2 L12 12.6" stroke="#b8b8b8" stroke-width="1.1"/></svg>
<svg style="left:5.5px;top:544px" width="15" height="12" viewBox="0 0 15 12"><path d="M0.8 11.2 V3.8 Q0.8 1.1 2.9 1.1 Q4.5 1.1 5.1 2.5 Q5.7 1.1 7.3 1.1 Q9.4 1.1 9.4 3.8 V6.5 L14.2 4.3 V11.1 L9.4 9 V11.2 Z" fill="none" stroke="#b8b8b8" stroke-width="1.05" stroke-linejoin="round"/><path d="M1.4 7.2 H5.2 L1.4 10.6 Z" fill="#777"/></svg>
<!--NAV-END-->
<!--RP-START-->
<div class="t" style="left:974.5px;top:39.08px;font-size:9px;color:#a9a9a9;transform:scaleY(1.12);transform-origin:0 7.62px;">Style</div>
<div class="t" style="left:1006.5px;top:39.08px;font-size:9px;color:#f0f0f0;transform:scaleY(1.12);transform-origin:0 7.62px;-webkit-text-stroke:0.15px #f0f0f0">Settings</div>
<div class="t" style="left:1051.3px;top:39.08px;font-size:9px;color:#a9a9a9;transform:scaleY(1.12);transform-origin:0 7.62px;">Interactions</div>
<div class="a" style="left:969px;top:55px;width:179px;height:1px;background:#2e2e2e;"></div>
<div class="a" style="left:1000px;top:55px;width:45.3px;height:1px;background:#a8a8a8;"></div>
<svg style="left:975.4px;top:63.4px" width="8" height="8" viewBox="0 0 8 8"><rect x="0.5" y="0.5" width="7" height="7" rx="0.6" fill="none" stroke="#bdbdbd" stroke-width="1"/><rect x="0.5" y="0.5" width="7" height="1.8" fill="#bdbdbd"/><rect x="0.5" y="5.7" width="7" height="1.8" fill="#bdbdbd"/></svg>
<div class="t" style="left:987.9px;top:63.02px;font-size:8.6px;color:#e6e6e6;transform:scaleY(1.12);transform-origin:0 7.28px;-webkit-text-stroke:0.1px #e6e6e6">Gallery Overview Settings</div>
<div class="a" style="left:974.9px;top:78.3px;width:167.1px;height:18.5px;background:#363636;border-radius:3px"></div>
<svg style="left:1013.5px;top:82px" width="11" height="11" viewBox="0 0 11 11"><path d="M5.3 0.7 L9.8 3.1 V8 L5.3 10.4 L0.8 8 V3.1 Z" fill="none" stroke="#d0d0d0" stroke-width="1" stroke-linejoin="round"/><path d="M0.9 3.2 L5.3 5.6 L9.7 3.2 M5.3 5.6 V10.3" fill="none" stroke="#d0d0d0" stroke-width="0.9"/></svg>
<div class="t" style="left:1027.6px;top:84.28px;font-size:9px;color:#e6e6e6;transform:scaleY(1.12);transform-origin:0 7.62px;-webkit-text-stroke:0.1px #e6e6e6">Create component</div>
<div class="a" style="left:969px;top:103px;width:179px;height:1px;background:#2e2e2e;"></div>
<div class="t" style="left:974.9px;top:117.48px;font-size:9px;color:#bdbdbd;transform:scaleY(1.12);transform-origin:0 7.62px;">ID</div>
<div class="a" style="left:1013.6px;top:111.1px;width:128px;height:18.7px;background:#171717;border:1px solid #303030;border-radius:3px"></div>
<div class="t" style="left:1016.8px;top:116.88px;font-size:9px;color:#727272;transform:scaleY(1.12);transform-origin:0 7.62px;">For in-page linking</div>
<div class="t" style="left:974.9px;top:144.58px;font-size:9px;color:#bdbdbd;transform:scaleY(1.12);transform-origin:0 7.62px;">Tag</div>
<div class="a" style="left:1013.6px;top:138.2px;width:128px;height:18.7px;background:#363636;border-radius:3px"></div>
<div class="t" style="left:1019.5px;top:144.08px;font-size:9px;color:#e6e6e6;transform:scaleY(1.12);transform-origin:0 7.62px;-webkit-text-stroke:0.1px #e6e6e6">Section</div>
<svg style="left:1130.5px;top:142.5px" width="6" height="10" viewBox="0 0 6 10"><path d="M0.8 3.4 L3 1.2 L5.2 3.4 M0.8 6.6 L3 8.8 L5.2 6.6" fill="none" stroke="#c8c8c8" stroke-width="0.9"/></svg>
<div class="a" style="left:969px;top:164px;width:179px;height:1px;background:#2e2e2e;"></div>
<div class="t" style="left:974.9px;top:176.59px;font-size:8.4px;font-weight:700;color:#efefef;transform:scaleY(1.12);transform-origin:0 7.11px;">Visibility &amp; user access</div>
<svg style="left:1133.2px;top:178.0px" width="6" height="4" viewBox="0 0 6 4"><path d="M0.6 0.8 L3 3.2 L5.4 0.8" fill="none" stroke="#bdbdbd" stroke-width="0.9"/></svg>
<div class="t" style="left:974.9px;top:202.30px;font-size:8.5px;color:#dedede;transform:scaleY(1.12);transform-origin:0 7.20px;-webkit-text-stroke:0.1px #dedede">Visibility</div>
<div class="a" style="left:1013.1px;top:195.9px;width:110.9px;height:19.1px;background:#333333;border-radius:3px"></div>
<div class="a" style="left:1014.4px;top:197.1px;width:53.9px;height:16.6px;background:#1d1d1d;border-radius:2.5px"></div>
<div class="t" style="left:1028.4px;top:201.68px;font-size:9px;color:#f0f0f0;transform:scaleY(1.12);transform-origin:0 7.62px;-webkit-text-stroke:0.1px #f0f0f0">Visible</div>
<div class="t" style="left:1082.2px;top:201.68px;font-size:9px;color:#b5b5b5;transform:scaleY(1.12);transform-origin:0 7.62px;">Hidden</div>
<svg style="left:1129.2px;top:202.4px" width="7" height="7" viewBox="0 0 7 7"><path d="M3.5 0.3 V6.7 M0.3 3.5 H6.7" stroke="#9a9a9a" stroke-width="0.9"/></svg>
<div class="a" style="left:974.9px;top:221.4px;width:167.1px;height:26.3px;background:transparent;border:1px solid #343434;border-radius:3px"></div>
<div class="t" style="left:1047.6px;top:231.38px;font-size:9px;color:#9a9a9a;transform:scaleY(1.12);transform-origin:0 7.62px;">None</div>
<div class="a" style="left:969px;top:254px;width:179px;height:1px;background:#2e2e2e;"></div>
<div class="t" style="left:974.9px;top:266.76px;font-size:8.55px;font-weight:700;color:#efefef;transform:scaleY(1.12);transform-origin:0 7.24px;">Custom attributes</div>
<svg style="left:1133.2px;top:268.8px" width="6" height="4" viewBox="0 0 6 4"><path d="M0.6 0.8 L3 3.2 L5.4 0.8" fill="none" stroke="#bdbdbd" stroke-width="0.9"/></svg>
<div class="t" style="left:974.9px;top:293.98px;font-size:9px;color:#a9a9a9;transform:scaleY(1.12);transform-origin:0 7.62px;">Custom Attributes</div>
<svg style="left:1129.2px;top:294.0px" width="7" height="7" viewBox="0 0 7 7"><path d="M3.5 0.3 V6.7 M0.3 3.5 H6.7" stroke="#9a9a9a" stroke-width="0.9"/></svg>
<div class="a" style="left:974.9px;top:306.6px;width:167.1px;height:19.9px;background:transparent;border:1px solid #343434;border-radius:3px"></div>
<div class="t" style="left:1047.6px;top:312.18px;font-size:9px;color:#9a9a9a;transform:scaleY(1.12);transform-origin:0 7.62px;">None</div>
<div class="a" style="left:969px;top:333px;width:179px;height:1px;background:#2e2e2e;"></div>
<div class="t" style="left:974.8px;top:345.80px;font-size:8.5px;font-weight:700;color:#efefef;transform:scaleY(1.12);transform-origin:0 7.20px;">Search index settings</div>
<svg style="left:1133.2px;top:347.3px" width="6" height="4" viewBox="0 0 6 4"><path d="M0.6 0.8 L3 3.2 L5.4 0.8" fill="none" stroke="#bdbdbd" stroke-width="0.9"/></svg>
<div class="a" style="left:974.8px;top:371.2px;width:8.9px;height:9px;background:#2f2f2f;border:1px solid #474747;border-radius:2px"></div>
<svg style="left:990px;top:367px" width="15" height="16" viewBox="0 0 15 16"><circle cx="5.4" cy="8.6" r="4" fill="none" stroke="#bdbdbd" stroke-width="1"/><path d="M8.2 11.6 L11.4 14.8" stroke="#bdbdbd" stroke-width="1.1"/><circle cx="9.6" cy="4.6" r="3.6" fill="#f0f0f0" stroke="#1e1e1e" stroke-width="0.8"/><path d="M7.8 4.6 H11.4" stroke="#1e1e1e" stroke-width="1.1"/></svg>
<div class="t" style="left:1010.2px;top:367.06px;font-size:8.55px;color:#e6e6e6;transform:scaleY(1.12);transform-origin:0 7.24px;-webkit-text-stroke:0.1px #e6e6e6">Exclude Section’s content from</div>
<div class="t" style="left:1010.2px;top:376.96px;font-size:8.55px;color:#e6e6e6;transform:scaleY(1.12);transform-origin:0 7.24px;-webkit-text-stroke:0.1px #e6e6e6">site search results</div>
<div class="a" style="left:974.8px;top:392px;width:167.2px;height:56px;background:#2a2a2a;border-radius:4px"></div>
<div class="t" style="left:980.9px;top:401.18px;font-size:9px;color:#ababab;transform:scaleY(1.12);transform-origin:0 7.62px;">To exclude the whole Home page, go</div>
<div class="t" style="left:980.9px;top:413.38px;font-size:9px;color:#ababab;transform:scaleY(1.12);transform-origin:0 7.62px;">to its <span style="text-decoration:underline;text-underline-offset:1.5px">Page settings</span>.</div>
<div class="t" style="left:980.9px;top:432.08px;font-size:9px;color:#6fa8ee;transform:scaleY(1.12);transform-origin:0 7.62px;">Ok, got it</div>
<div class="a" style="left:969px;top:454px;width:179px;height:1px;background:#2e2e2e;"></div>
<div class="t" style="left:974.6px;top:467.60px;font-size:8.5px;font-weight:700;color:#efefef;transform:scaleY(1.12);transform-origin:0 7.20px;">Editor settings</div>
<svg style="left:1133.2px;top:469.0px" width="6" height="4" viewBox="0 0 6 4"><path d="M0.6 0.8 L3 3.2 L5.4 0.8" fill="none" stroke="#bdbdbd" stroke-width="0.9"/></svg>
<div class="a" style="left:974.6px;top:491.7px;width:9.1px;height:8.9px;background:#2a2a2a;border-radius:2px"></div>
<svg style="left:975.5px;top:492.5px" width="8" height="7" viewBox="0 0 8 7"><path d="M1 3.6 L3 5.6 L7 1.2" fill="none" stroke="#f0f0f0" stroke-width="1.2"/></svg>
<div class="t" style="left:988.8px;top:493.42px;font-size:8.6px;color:#e6e6e6;transform:scaleY(1.12);transform-origin:0 7.28px;-webkit-text-stroke:0.1px #e6e6e6">Collaborators can edit this element</div>
<div class="a" style="left:969px;top:509.5px;width:179px;height:1px;background:#2e2e2e;"></div>
<svg style="left:162.5px;top:548.4px" width="8" height="9" viewBox="0 0 8 9"><rect x="0.5" y="0.6" width="7" height="7.6" rx="0.5" fill="none" stroke="#bdbdbd" stroke-width="1"/><rect x="0.5" y="0.6" width="7" height="1.8" fill="#bdbdbd"/></svg>
<div class="t" style="left:175.5px;top:548.83px;font-size:8.7px;color:#cfcfcf;transform:scaleY(1.12);transform-origin:0 7.37px;">Body</div>
<svg style="left:201px;top:541.5px" width="6" height="22" viewBox="0 0 6 22"><path d="M0.6 0.5 L5.2 11 L0.6 21.5" fill="none" stroke="#3a3a3a" stroke-width="1"/></svg>
<svg style="left:212.7px;top:548.6px" width="8" height="8" viewBox="0 0 8 8"><rect x="0.5" y="0.5" width="7" height="7" rx="0.5" fill="none" stroke="#bdbdbd" stroke-width="1"/><rect x="0.5" y="0.5" width="7" height="1.8" fill="#bdbdbd"/><rect x="0.5" y="5.7" width="7" height="1.8" fill="#bdbdbd"/></svg>
<div class="t" style="left:226px;top:548.96px;font-size:8.55px;color:#cfcfcf;transform:scaleY(1.12);transform-origin:0 7.24px;">Gallery Overview</div>
<svg style="left:296.6px;top:541.5px" width="6" height="22" viewBox="0 0 6 22"><path d="M0.6 0.5 L5.2 11 L0.6 21.5" fill="none" stroke="#3a3a3a" stroke-width="1"/></svg>
<!--RP-END-->
</body></html>
